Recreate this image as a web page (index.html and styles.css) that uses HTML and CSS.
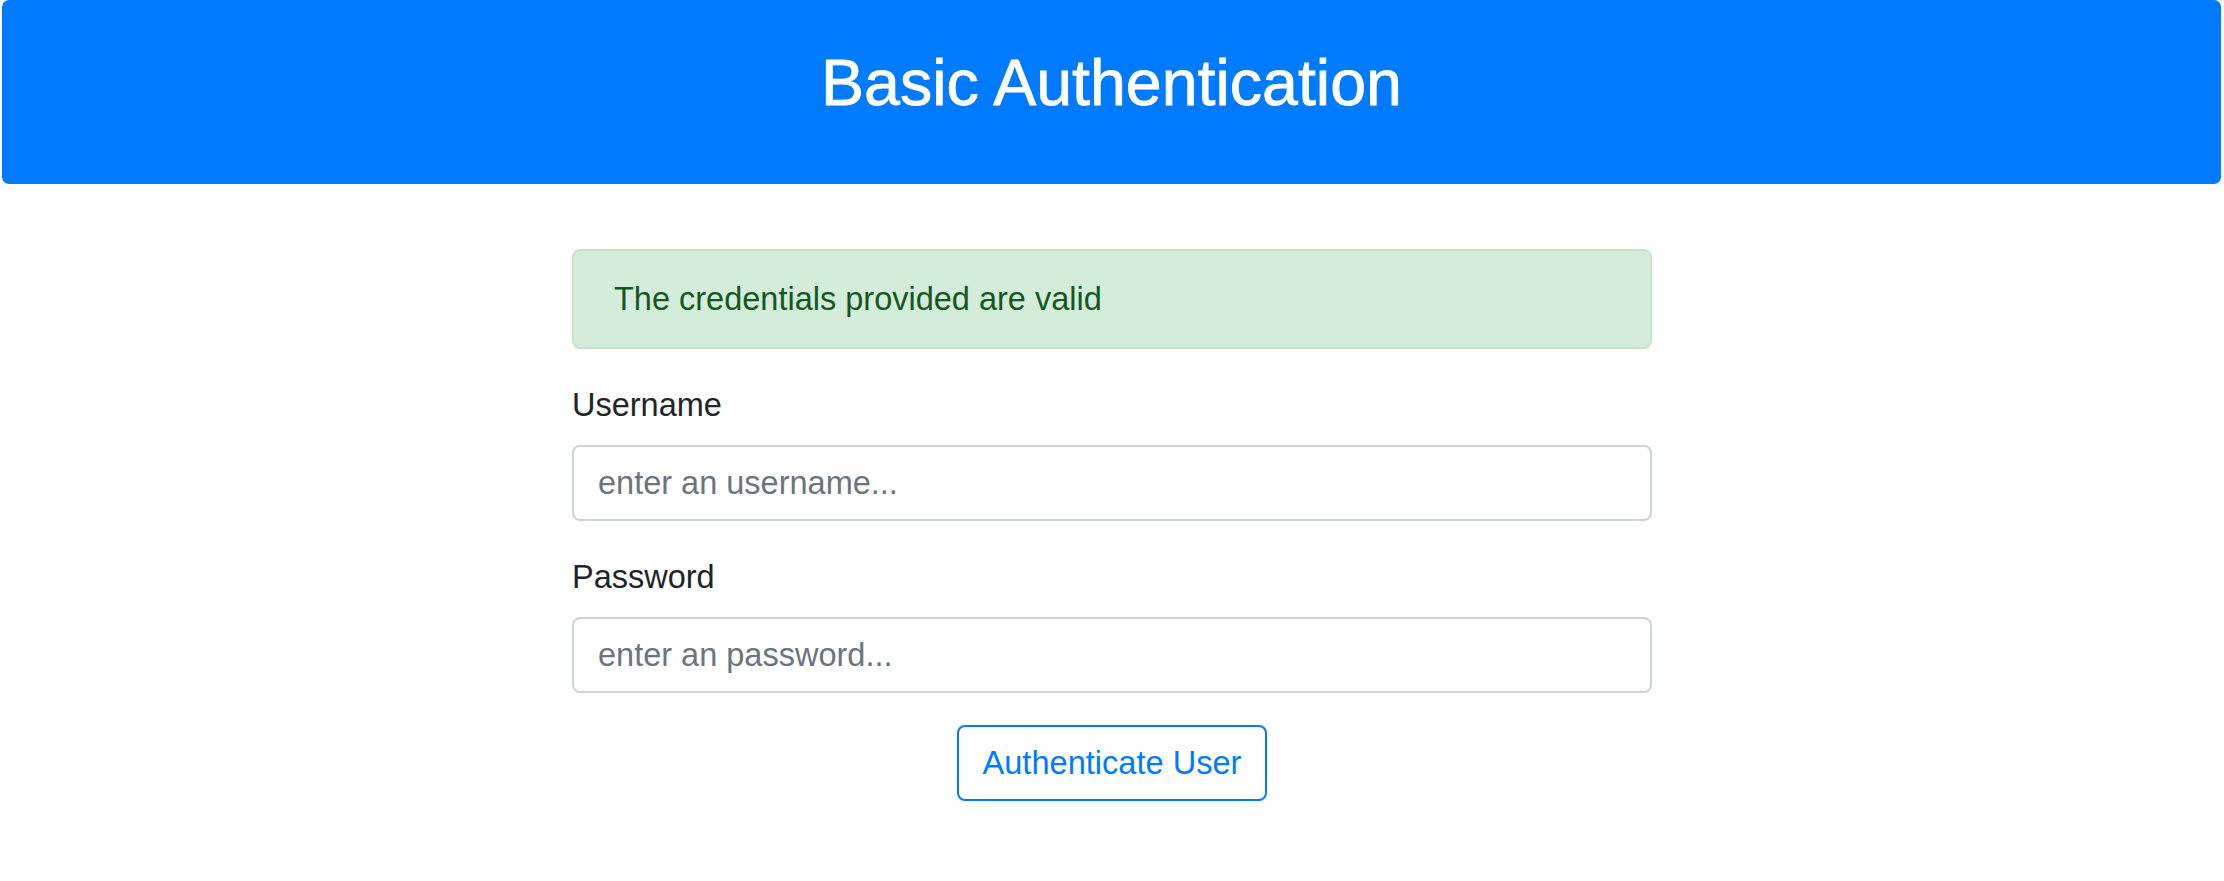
FILE: index.html
```html
<!DOCTYPE html>
<html lang="en">
<head>
<meta charset="utf-8">
<title>Basic Authentication</title>
<link rel="stylesheet" href="styles.css">
</head>
<body>
<header class="banner">
  <h1 class="banner-title">Basic Authentication</h1>
</header>
<main class="content">
  <div class="alert-success">The credentials provided are valid</div>
  <form class="auth-form">
    <div class="field">
      <label class="field-label" for="username">Username</label>
      <input class="field-input" id="username" type="text" placeholder="enter an username...">
    </div>
    <div class="field">
      <label class="field-label" for="password">Password</label>
      <input class="field-input" id="password" type="password" placeholder="enter an password...">
    </div>
    <div class="actions">
      <button class="btn-outline" type="button">Authenticate User</button>
    </div>
  </form>
</main>
</body>
</html>
```
FILE: styles.css
```css
html, body {
  margin: 0;
  padding: 0;
  background: #ffffff;
}

body {
  font-family: "Liberation Sans", Arial, Helvetica, sans-serif;
  font-size: 32.5px;
  line-height: 48px;
  color: #212529;
}

.banner {
  margin: 0 3px 0 2px;
  background: #007bff;
  border-radius: 7px;
  padding: 45px 0 62px;
  text-align: center;
}

.banner-title {
  margin: 0;
  font-size: 64.5px;
  line-height: 77px;
  font-weight: 400;
  color: #ffffff;
  -webkit-text-stroke: 0.8px #ffffff;
}

.content {
  width: 1080px;
  margin: 65px auto 0;
}

.alert-success {
  padding: 24px 40px;
  border: 2px solid #c3e6cb;
  border-radius: 8px;
  background: #d4edda;
  color: #155724;
  margin-bottom: 32px;
}

.auth-form {
  margin: 0;
}

.field {
  margin-bottom: 32px;
}

.field-label {
  display: block;
  margin-bottom: 16px;
  color: #212529;
}

.field-input {
  display: block;
  box-sizing: border-box;
  width: 100%;
  height: 76px;
  padding: 12px 24px;
  border: 2px solid #ced4da;
  border-radius: 8px;
  background: #ffffff;
  font-family: inherit;
  font-size: 32.5px;
  line-height: 48px;
  color: #495057;
  outline: none;
}

.field-input::placeholder {
  color: #6c757d;
  opacity: 1;
}

.actions {
  text-align: center;
}

.btn-outline {
  display: inline-block;
  padding: 12px 24px;
  border: 2px solid #007bff;
  border-radius: 8px;
  background: #ffffff;
  color: #007bff;
  font-family: inherit;
  font-size: 32.6px;
  line-height: 48px;
  cursor: pointer;
}
```
